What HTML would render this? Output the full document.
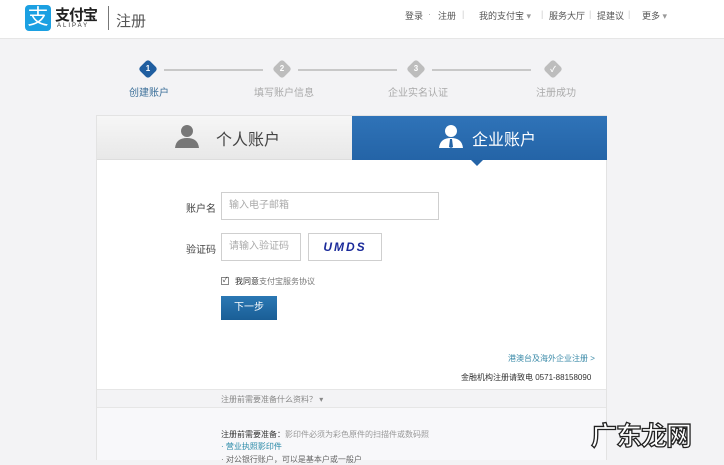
<!DOCTYPE html>
<html><head><meta charset="utf-8"><style>
*{margin:0;padding:0;box-sizing:border-box}
body{width:724px;height:460px;overflow:hidden;background:#f3f3f5;font-family:"Liberation Sans","Noto Sans CJK SC",sans-serif;position:relative;color:#333}
.abs{position:absolute}
.hdr{left:0;top:0;width:724px;height:39px;background:#fff;border-bottom:1px solid #e6e6e6}
.nav{font-size:9px;color:#555;top:9px;white-space:nowrap}
.step{width:14px;height:14px;transform:rotate(45deg);border-radius:3px;background:#bdbdbd}
.stepn{font-size:8px;color:#fff;font-weight:bold;width:14px;text-align:center}
.line{height:2px;background:#c8c8c8;top:69px}
.sl{font-size:10px;color:#aaa;top:84px}
.card{left:96px;top:115px;width:511px;height:345px;background:#fff;border:1px solid #e3e3e3}
.box{border:1px solid #cfcfcf;background:#fff;font-size:10px;color:#aaa;padding-left:7px;line-height:26px}
.lab{font-size:10px;color:#444}
</style></head><body>
<div class="abs hdr"></div>
<div class="abs" style="left:25px;top:5px;width:26px;height:26px;background:#1ba0e2;border-radius:4px;color:#fff;font-size:21px;line-height:26px;text-align:center">支</div>
<div class="abs" style="left:55px;top:4px;font-size:15px;font-weight:bold;color:#222;letter-spacing:-1px">支付宝</div>
<div class="abs" style="left:57px;top:23px;font-size:6px;letter-spacing:2px;color:#333">ALIPAY</div>
<div class="abs" style="left:108px;top:6px;width:1px;height:24px;background:#777"></div>
<div class="abs" style="left:116px;top:10px;font-size:15px;color:#555">注册</div>
<div class="abs nav" style="left:405px">登录</div>
<div class="abs nav" style="left:428px;color:#aaa">·</div>
<div class="abs nav" style="left:438px">注册</div>
<div class="abs nav" style="left:462px;color:#ccc">|</div>
<div class="abs nav" style="left:479px">我的支付宝 <span style="color:#999">▾</span></div>
<div class="abs nav" style="left:541px;color:#ccc">|</div>
<div class="abs nav" style="left:549px">服务大厅</div>
<div class="abs nav" style="left:589px;color:#ccc">|</div>
<div class="abs nav" style="left:597px">提建议</div>
<div class="abs nav" style="left:628px;color:#ccc">|</div>
<div class="abs nav" style="left:642px">更多 <span style="color:#999">▾</span></div>

<div class="abs line" style="left:164px;width:99px"></div>
<div class="abs line" style="left:298px;width:99px"></div>
<div class="abs line" style="left:432px;width:99px"></div>
<div class="abs step" style="left:141px;top:62px;background:#1f5ea0"></div><div class="abs stepn" style="left:141px;top:64px">1</div>
<div class="abs step" style="left:275px;top:62px"></div><div class="abs stepn" style="left:275px;top:64px">2</div>
<div class="abs step" style="left:409px;top:62px"></div><div class="abs stepn" style="left:409px;top:64px">3</div>
<div class="abs step" style="left:546px;top:62px"></div><div class="abs stepn" style="left:546px;top:64px">✓</div>
<div class="abs sl" style="left:129px;color:#3b6f99">创建账户</div>
<div class="abs sl" style="left:254px">填写账户信息</div>
<div class="abs sl" style="left:388px">企业实名认证</div>
<div class="abs sl" style="left:536px">注册成功</div>

<div class="abs card"></div>
<div class="abs" style="left:97px;top:116px;width:255px;height:44px;background:linear-gradient(#f6f6f6,#e8e8e8);border-bottom:1px solid #ddd"></div>
<svg class="abs" style="left:174px;top:124px" width="26" height="24"><circle cx="13" cy="7" r="6" fill="#777"/><path d="M1 24 Q2 14 13 14 Q24 14 25 24Z" fill="#777"/></svg>
<div class="abs" style="left:216px;top:126px;font-size:16px;color:#444">个人账户</div>
<div class="abs" style="left:352px;top:116px;width:255px;height:44px;background:linear-gradient(#2f73b8,#2464a7)"></div>
<div class="abs" style="left:470px;top:159px;width:0;height:0;border-left:7px solid transparent;border-right:7px solid transparent;border-top:7px solid #2464a7"></div>
<svg class="abs" style="left:438px;top:124px" width="26" height="24"><circle cx="13" cy="7" r="6" fill="#fff"/><path d="M1 24 Q2 14 13 14 Q24 14 25 24Z" fill="#fff"/><path d="M12 15 L14 15 L15 23 L13 24 L11 23Z" fill="#2464a7"/></svg>
<div class="abs" style="left:472px;top:126px;font-size:16px;color:#fff">企业账户</div>

<div class="abs lab" style="left:186px;top:200px">账户名</div>
<div class="abs box" style="left:221px;top:192px;width:218px;height:28px">输入电子邮箱</div>
<div class="abs lab" style="left:186px;top:241px">验证码</div>
<div class="abs box" style="left:221px;top:233px;width:80px;height:28px">请输入验证码</div>
<div class="abs" style="left:308px;top:233px;width:74px;height:28px;border:1px solid #cfcfcf;color:#1a2a9a;font-style:italic;font-weight:bold;font-size:12px;text-align:center;line-height:26px;letter-spacing:2px">UMDS</div>
<div class="abs" style="left:221px;top:277px;width:8px;height:8px;border:1px solid #888;font-size:7px;line-height:6px;text-align:center">✓</div>
<div class="abs" style="left:235px;top:276px;font-size:8px;color:#333">我同意<span style="color:#777">支付宝服务协议</span></div>
<div class="abs" style="left:221px;top:296px;width:56px;height:24px;background:linear-gradient(#2b78b4,#1a5e96);color:#fff;font-size:10px;text-align:center;line-height:24px">下一步</div>

<div class="abs" style="left:508px;top:353px;font-size:8px;color:#3a8aa8">港澳台及海外企业注册 &gt;</div>
<div class="abs" style="left:461px;top:372px;font-size:8px;color:#333">金融机构注册请致电 0571-88158090</div>
<div class="abs" style="left:97px;top:389px;width:509px;height:71px;background:#f8f8fa"></div>
<div class="abs" style="left:97px;top:389px;width:509px;height:19px;background:#f3f3f5;border-top:1px solid #e6e6e6;border-bottom:1px solid #e6e6e6"></div>
<div class="abs" style="left:221px;top:394px;font-size:8px;color:#888">注册前需要准备什么资料？ ▾</div>
<div class="abs" style="left:221px;top:429px;font-size:8px;color:#333">注册前需要准备：<span style="color:#999">影印件必须为彩色原件的扫描件或数码照</span></div>
<div class="abs" style="left:221px;top:441px;font-size:8px;color:#2a8aa8">· 营业执照影印件</div>
<div class="abs" style="left:221px;top:454px;font-size:8px;color:#666">· 对公银行账户，可以是基本户或一般户</div>
<div class="abs" style="left:591px;top:416px;font-size:26px;font-weight:bold;color:#fff;-webkit-text-stroke:1.3px #222;letter-spacing:-1px">广东龙网</div>
</body></html>
